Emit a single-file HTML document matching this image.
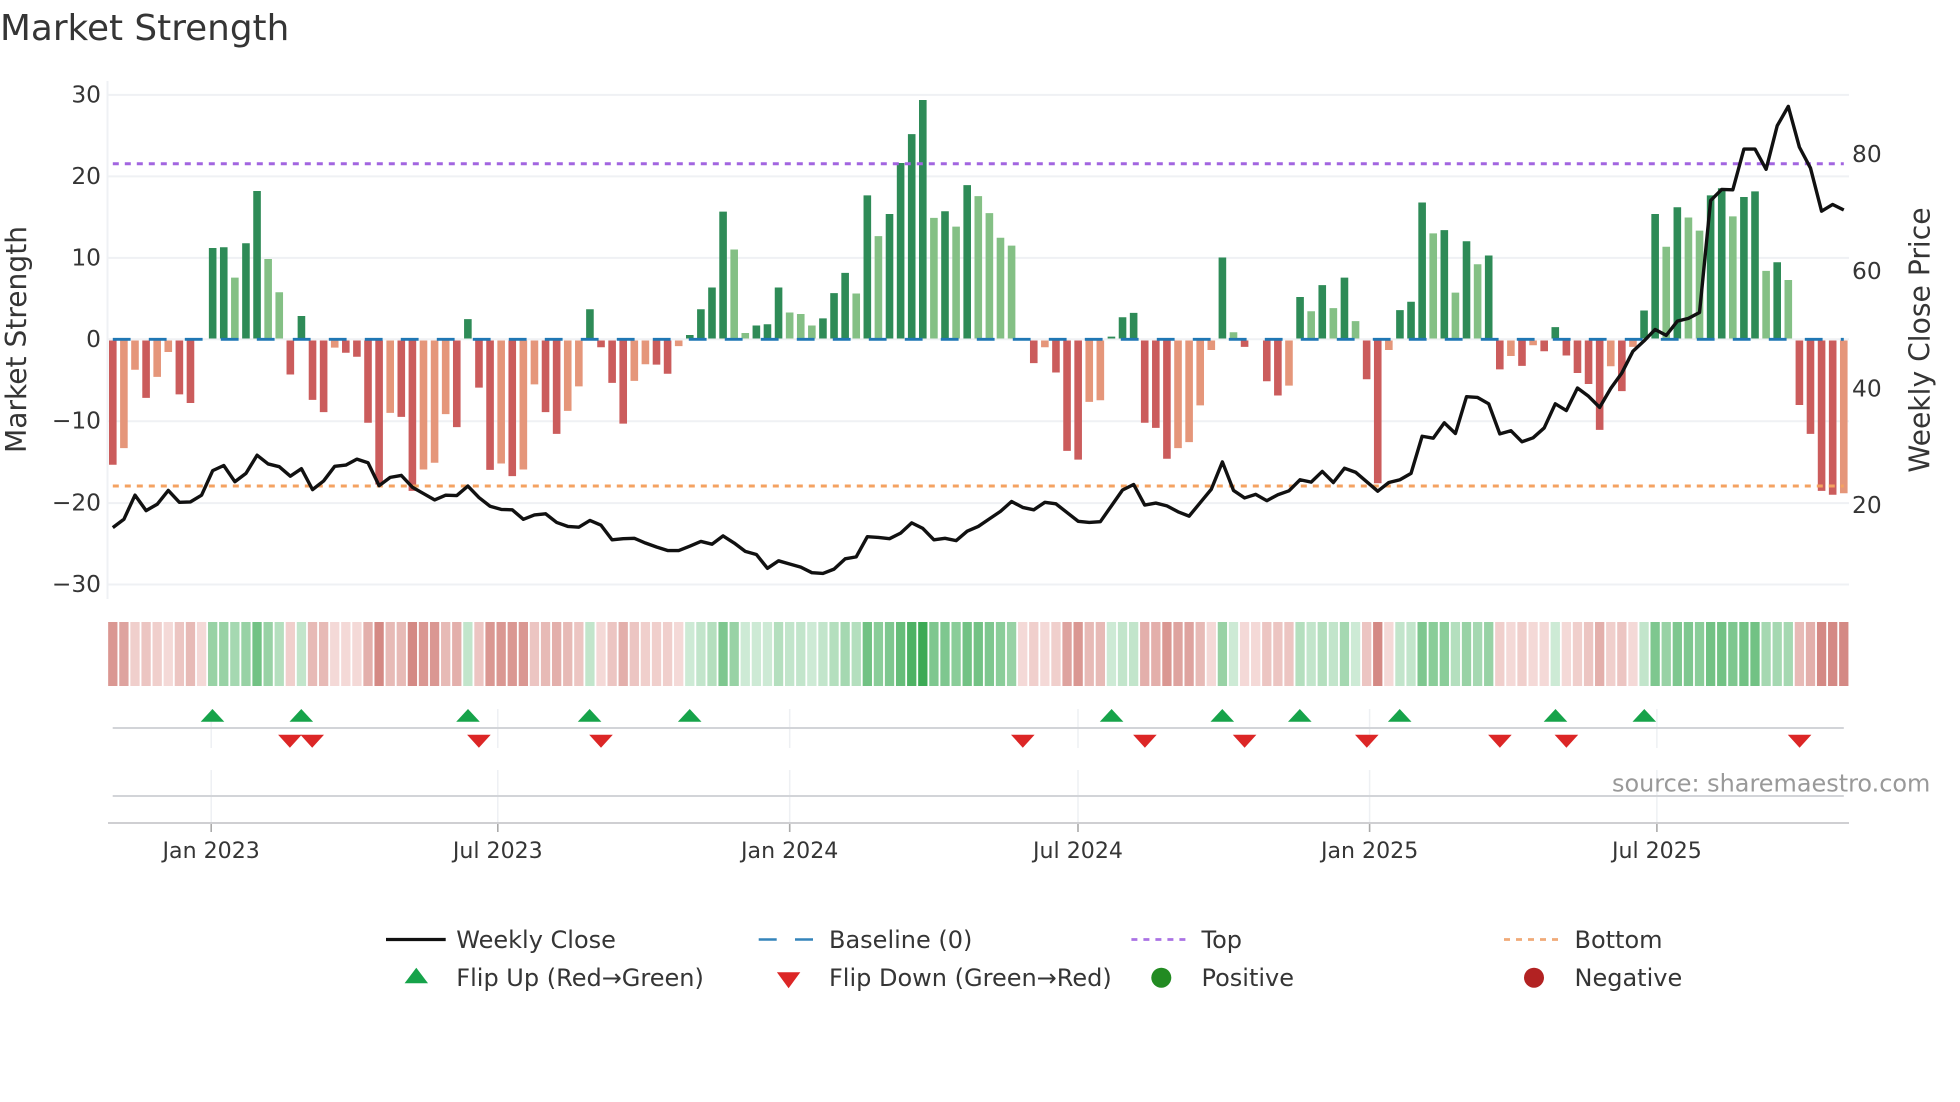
<!DOCTYPE html>
<html><head><meta charset="utf-8"><title>Market Strength</title>
<style>
html,body{margin:0;padding:0;background:#fff}
svg{display:block}
text{font-family:"DejaVu Sans","Liberation Sans",sans-serif;fill:#353535}
</style></head>
<body>
<svg width="1960" height="1102" viewBox="0 0 1960 1102" xmlns="http://www.w3.org/2000/svg">
<rect width="1960" height="1102" fill="#fff"/>
<text x="0" y="40" font-size="35.8">Market Strength</text>

<!-- grid -->
<g stroke="#eff1f4" stroke-width="2" fill="none">
<path d="M107.5 81V599"/>
<path d="M108 94.9H1849M108 176.4H1849M108 257.9H1849M108 339.3H1849M108 421.2H1849M108 503.1H1849M108 584.5H1849"/>
</g>

<!-- y ticks -->
<g font-size="23.3" text-anchor="end">
<text x="101" y="102.4">30</text>
<text x="101" y="183.9">20</text>
<text x="101" y="265.4">10</text>
<text x="101" y="346.8">0</text>
<text x="101" y="428.7">−10</text>
<text x="101" y="510.6">−20</text>
<text x="101" y="592">−30</text>
</g>
<g font-size="23.3">
<text x="1852" y="162">80</text>
<text x="1852" y="279">60</text>
<text x="1852" y="396.4">40</text>
<text x="1852" y="512.8">20</text>
</g>
<text transform="translate(26 339.5) rotate(-90)" font-size="28.1" text-anchor="middle">Market Strength</text>
<text transform="translate(1929.5 340) rotate(-90)" font-size="28.2" text-anchor="middle">Weekly Close Price</text>

<!-- bars -->
<g transform="translate(112.8 0) scale(11.096 .3955)" fill="none" stroke-width=".685">
<path stroke="#2e8b57" d="M9 856V627M10 856V625M12 856V615M13 856V483M17 856V799M32 856V807M43 856V782M52 856V847M53 856V782M54 856V727M55 856V535M58 856V823M59 856V820M60 856V727M64 856V805M65 856V741M66 856V690M68 856V494M70 856V541M71 856V412M72 856V339M73 856V253M75 856V534M77 856V468M90 856V851M91 856V802M92 856V791M100 856V651M107 856V751M109 856V721M111 856V702M116 856V784M117 856V763M118 856V512M120 856V582M122 856V610M124 856V646M130 856V827M138 856V785M139 856V541M141 856V524M144 856V494M145 856V476M147 856V498M148 856V484M150 856V663"/>
<path stroke="#84c085" d="M11 856V702M14 856V655M15 856V739M56 856V631M57 856V842M61 856V790M62 856V794M63 856V823M67 856V742M69 856V597M74 856V551M76 856V573M78 856V496M79 856V539M80 856V601M81 856V621M101 856V840M108 856V787M110 856V779M112 856V812M119 856V590M121 856V740M123 856V668M140 856V624M142 856V550M143 856V583M146 856V547M149 856V685M151 856V708"/>
<path stroke="#cb5c5c" d="M0 861V1175M3 861V1006M6 861V997M7 861V1019M16 861V947M18 861V1011M19 861V1042M21 861V892M22 861V902M23 861V1069M24 861V1225M26 861V1054M27 861V1241M31 861V1080M33 861V980M34 861V1188M36 861V1204M39 861V1042M40 861V1097M44 861V878M45 861V968M46 861V1071M49 861V922M50 861V945M83 861V918M85 861V942M86 861V1140M87 861V1162M93 861V1069M94 861V1082M95 861V1160M102 861V877M104 861V964M105 861V1000M113 861V959M114 861V1222M125 861V934M127 861V925M129 861V888M131 861V899M132 861V943M133 861V971M134 861V1087M136 861V989M152 861V1024M153 861V1097M154 861V1241M155 861V1251"/>
<path stroke="#e5967a" d="M1 861V1133M2 861V935M4 861V953M5 861V890M20 861V879M25 861V1044M28 861V1187M29 861V1170M30 861V1047M35 861V1172M37 861V1187M38 861V972M41 861V1039M42 861V977M47 861V963M48 861V921M51 861V875M84 861V878M88 861V1016M89 861V1012M96 861V1133M97 861V1118M98 861V1025M99 861V885M106 861V975M115 861V885M126 861V900M128 861V873M135 861V926M137 861V877M156 861V1247"/>
</g>

<!-- reference lines -->
<path d="M112.8 339.3H1843.8" stroke="#1f77b4" stroke-width="2.8" stroke-dasharray="17.8 18.2" fill="none"/>
<path d="M112.8 163.7H1843.8" stroke="#a265e0" stroke-width="3" stroke-dasharray="6 6" fill="none"/>
<path d="M112.8 486H1843.8" stroke="#f4a261" stroke-width="3" stroke-dasharray="6 6" fill="none"/>

<!-- weekly close -->
<g transform="translate(112.8 0) scale(11.096 .3955)">
<polyline fill="none" stroke="#111" stroke-width="3.4" stroke-linejoin="round" vector-effect="non-scaling-stroke" points="0,1334 1,1313 2,1252 3,1291 4,1275 5,1240 6,1270 7,1269 8,1252 9,1190 10,1177 11,1218 12,1197 13,1151 14,1173 15,1180 16,1204 17,1185 18,1238 19,1216 20,1179 21,1176 22,1161 23,1170 24,1228 25,1207 26,1202 27,1232 28,1248 29,1264 30,1252 31,1253 32,1229 33,1258 34,1280 35,1288 36,1289 37,1313 38,1302 39,1299 40,1321 41,1331 42,1333 43,1316 44,1328 45,1365 46,1362 47,1361 48,1373 49,1383 50,1392 51,1392 52,1381 53,1369 54,1376 55,1355 56,1373 57,1394 58,1402 59,1437 60,1418 61,1426 62,1434 63,1448 64,1450 65,1439 66,1413 67,1408 68,1357 69,1359 70,1362 71,1348 72,1322 73,1336 74,1365 75,1361 76,1367 77,1343 78,1331 79,1312 80,1293 81,1268 82,1283 83,1289 84,1270 85,1274 86,1296 87,1318 88,1321 89,1319 90,1279 91,1239 92,1225 93,1277 94,1272 95,1279 96,1294 97,1305 98,1271 99,1237 100,1168 101,1240 102,1259 103,1250 104,1266 105,1251 106,1241 107,1213 108,1219 109,1192 110,1220 111,1184 112,1194 113,1218 114,1242 115,1220 116,1213 117,1197 118,1103 119,1108 120,1069 121,1096 122,1003 123,1005 124,1021 125,1097 126,1089 127,1117 128,1107 129,1082 130,1021 131,1038 132,981 133,1002 134,1030 135,982 136,943 137,888 138,862 139,833 140,848 141,812 142,805 143,790 144,507 145,479 146,480 147,377 148,377 149,428 150,318 151,269 152,372 153,425 154,534 155,517 156,531"/>
</g>

<!-- heat strip -->
<g transform="translate(112.8 622) scale(11.096 64)" fill="none" stroke-width=".838">
<path stroke="#f4d9d7" d="M5 0V1M8 0V1M20 0V1M21 0V1M22 0V1M44 0V1M51 0V1M82 0V1M84 0V1M99 0V1M102 0V1M103 0V1M115 0V1M126 0V1M128 0V1M129 0V1M131 0V1M137 0V1"/>
<path stroke="#f0cfcc" d="M2 0V1M4 0V1M16 0V1M48 0V1M49 0V1M50 0V1M83 0V1M85 0V1M125 0V1M127 0V1M132 0V1M135 0V1"/>
<path stroke="#ecc5c2" d="M3 0V1M6 0V1M33 0V1M38 0V1M42 0V1M45 0V1M47 0V1M104 0V1M105 0V1M106 0V1M113 0V1M133 0V1M136 0V1"/>
<path stroke="#e7bab6" d="M7 0V1M18 0V1M19 0V1M25 0V1M26 0V1M30 0V1M39 0V1M41 0V1M88 0V1M89 0V1M98 0V1M152 0V1"/>
<path stroke="#e3afab" d="M23 0V1M31 0V1M40 0V1M46 0V1M93 0V1M94 0V1M134 0V1M153 0V1"/>
<path stroke="#dea39f" d="M1 0V1M86 0V1M96 0V1M97 0V1"/>
<path stroke="#da9792" d="M0 0V1M28 0V1M29 0V1M34 0V1M35 0V1M36 0V1M37 0V1M87 0V1M95 0V1"/>
<path stroke="#d48984" d="M24 0V1M27 0V1M114 0V1M154 0V1M155 0V1M156 0V1"/>
<path stroke="#cdeAd5" d="M52 0V1M57 0V1M58 0V1M59 0V1M63 0V1M90 0V1M101 0V1M112 0V1M130 0V1"/>
<path stroke="#c2e5cb" d="M17 0V1M32 0V1M43 0V1M53 0V1M61 0V1M62 0V1M64 0V1M91 0V1M92 0V1M108 0V1M110 0V1M116 0V1M117 0V1M138 0V1"/>
<path stroke="#b4dfbe" d="M15 0V1M54 0V1M60 0V1M65 0V1M67 0V1M107 0V1M109 0V1M121 0V1"/>
<path stroke="#a5d8b1" d="M11 0V1M66 0V1M111 0V1M123 0V1M149 0V1M150 0V1M151 0V1"/>
<path stroke="#98d2a5" d="M9 0V1M10 0V1M12 0V1M14 0V1M56 0V1M81 0V1M100 0V1M122 0V1M124 0V1M140 0V1"/>
<path stroke="#8acd99" d="M69 0V1M76 0V1M80 0V1M119 0V1M120 0V1M143 0V1"/>
<path stroke="#7ec78f" d="M55 0V1M70 0V1M74 0V1M75 0V1M79 0V1M118 0V1M139 0V1M141 0V1M142 0V1M146 0V1"/>
<path stroke="#72c284" d="M13 0V1M68 0V1M77 0V1M78 0V1M144 0V1M145 0V1M147 0V1M148 0V1"/>
<path stroke="#66bd79" d="M71 0V1"/>
<path stroke="#4eb264" d="M72 0V1"/>
<path stroke="#3caa55" d="M73 0V1"/>
</g>

<!-- lower panels -->
<g stroke="#eef0f3" stroke-width="1.5" fill="none">
<path d="M211.2 709V748M497.8 709V748M789.7 709V748M1078 709V748M1369.6 709V748M1656.9 709V748"/>
<path d="M211.2 770V822M497.8 770V822M789.7 770V822M1078 770V822M1369.6 770V822M1656.9 770V822"/>
</g>
<g stroke="#d2d4d8" stroke-width="2" fill="none">
<path d="M112.7 728H1843.8M112.7 796H1843.8"/>
</g>
<path d="M108 823H1849" stroke="#cfcfd2" stroke-width="2" fill="none"/>
<path d="M211.2 824V832M497.8 824V832M789.7 824V832M1078 824V832M1369.6 824V832M1656.9 824V832" stroke="#aaa" stroke-width="1.6" fill="none"/>

<!-- flips up -->
<g fill="#16a34a">
<polygon points="212.5,709 224.3,721.7 200.7,721.7"/>
<polygon points="301.3,709 313.1,721.7 289.5,721.7"/>
<polygon points="468,709 479.8,721.7 456.2,721.7"/>
<polygon points="589.6,709 601.4,721.7 577.8,721.7"/>
<polygon points="689.7,709 701.5,721.7 677.9,721.7"/>
<polygon points="1111.6,709 1123.4,721.7 1099.8,721.7"/>
<polygon points="1222.3,709 1234.1,721.7 1210.5,721.7"/>
<polygon points="1299.8,709 1311.6,721.7 1288,721.7"/>
<polygon points="1399.7,709 1411.5,721.7 1387.9,721.7"/>
<polygon points="1555.5,709 1567.3,721.7 1543.7,721.7"/>
<polygon points="1644.3,709 1656.1,721.7 1632.5,721.7"/>
</g>
<!-- flips down -->
<g fill="#dc2626">
<polygon points="289.9,747.7 278.1,734.7 301.7,734.7"/>
<polygon points="312.2,747.7 300.4,734.7 324,734.7"/>
<polygon points="478.9,747.7 467.1,734.7 490.7,734.7"/>
<polygon points="601,747.7 589.2,734.7 612.8,734.7"/>
<polygon points="1022.8,747.7 1011,734.7 1034.6,734.7"/>
<polygon points="1144.9,747.7 1133.1,734.7 1156.7,734.7"/>
<polygon points="1244.6,747.7 1232.8,734.7 1256.4,734.7"/>
<polygon points="1366.8,747.7 1355,734.7 1378.6,734.7"/>
<polygon points="1499.9,747.7 1488.1,734.7 1511.7,734.7"/>
<polygon points="1566.4,747.7 1554.6,734.7 1578.2,734.7"/>
<polygon points="1799.6,747.7 1787.8,734.7 1811.4,734.7"/>
</g>

<!-- x ticks -->
<g font-size="22.1" text-anchor="middle">
<text x="211.2" y="858">Jan 2023</text>
<text x="497.8" y="858">Jul 2023</text>
<text x="789.7" y="858">Jan 2024</text>
<text x="1078" y="858">Jul 2024</text>
<text x="1369.6" y="858">Jan 2025</text>
<text x="1656.9" y="858">Jul 2025</text>
</g>
<text x="1612" y="791.7" font-size="23.95" style="fill:#999">source: sharemaestro.com</text>

<!-- legend -->
<path d="M386 939.5H445.7" stroke="#111" stroke-width="3.2" fill="none"/>
<path d="M758.7 939.5H813" stroke="#3484ba" stroke-width="2.6" stroke-dasharray="18 18.3" fill="none"/>
<path d="M1131.4 939.5H1186.3" stroke="#aa72e4" stroke-width="2.8" stroke-dasharray="6 6" fill="none"/>
<path d="M1504 939.5H1558.7" stroke="#f0aa78" stroke-width="2.8" stroke-dasharray="6 6" fill="none"/>
<polygon points="416.3,967.7 428,983.3 404.6,983.3" fill="#16a34a"/>
<polygon points="788.6,988.3 776.9,972.3 800.3,972.3" fill="#dc2626"/>
<circle cx="1161.3" cy="977.7" r="10" fill="#228b22"/>
<circle cx="1534" cy="977.7" r="10" fill="#b22222"/>
<g font-size="24">
<text x="456.3" y="948">Weekly Close</text>
<text x="829" y="948">Baseline (0)</text>
<text x="1201.5" y="948">Top</text>
<text x="1574.5" y="948">Bottom</text>
<text x="456.3" y="986">Flip Up (Red→Green)</text>
<text x="829" y="986">Flip Down (Green→Red)</text>
<text x="1201.5" y="986">Positive</text>
<text x="1574.5" y="986">Negative</text>
</g>
</svg>
</body></html>
